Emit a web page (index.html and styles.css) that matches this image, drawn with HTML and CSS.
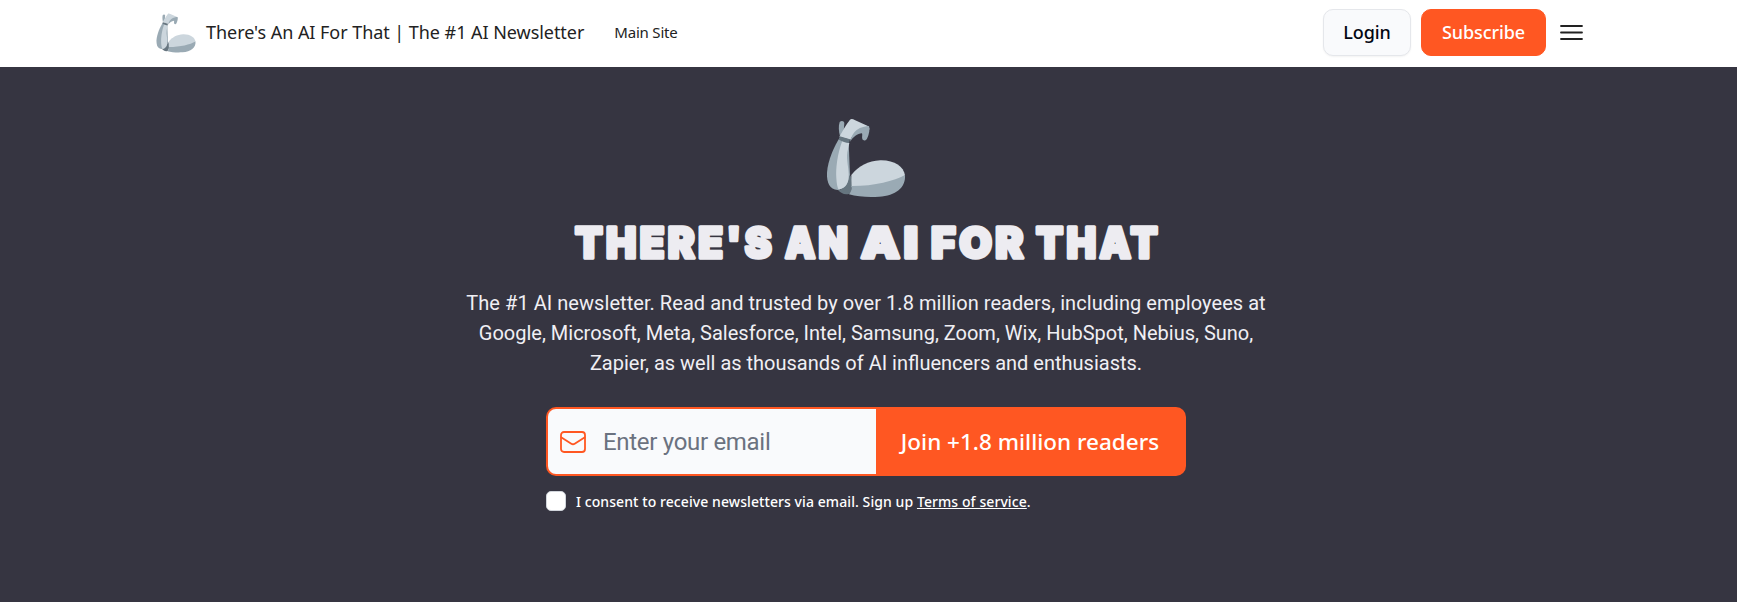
FILE: index.html
```
<!DOCTYPE html>
<html lang="en">

<head>
    <meta charset="UTF-8" />
    <title>There's An AI For That | The #1 AI Newsletter</title>
    <link rel="stylesheet" href="styles.css">
</head>

<body>
    <svg class="defs" width="0" height="0">
        <symbol id="arm" viewBox="78 54 240 240">
            <path fill="#9aaab4" d="M119 66c5-5 13-4 14 3l-2 26-11 14c-4-16-5-31-1-43z" />
            <path fill="#9aaab4" d="M119 113c-15 23-36 68-38 105-1 31 8 50 32 52l28-8 9-34-4-102z" />
            <path fill="#66757f" d="M148 226c8 2 13 24 7 41-3 9-5 16-14 16-10 1-20-5-27-13 18-3 29-13 34-44z" />
            <path fill="#ccd6dd" d="M127 122c-15 40-20 82-18 112 1 18 3 28 7 35 16-3 29-14 30-37 2-25-8-51-4-75l6-28z" />
            <path fill="#ccd6dd" d="M118 110c8-14 19-35 32-51 4-4 9-2 14 1l38 17c8 4 7 12 3 16-20-5-42 3-54 26z" />
            <path fill="#9aaab4" d="M150 125c5-18 11-28 20-35 13-9 27-12 37-12 3 10 1 24-6 38-4 7-11 7-14 1-2-6 1-12-1-17-14 1-26 11-36 25z" />
            <path fill="#66757f" d="M119 109l31 9-3 11c-10-1-20-5-30-10z" />
            <path fill="#ccd6dd" d="M154 225c21-27 51-42 87-44 42-1 70 19 74 45-24 20-90 36-160 35z" />
            <path fill="#9aaab4" d="M155 258c71 0 127-15 160-33 3 38-28 62-78 65-32 2-65 0-90-7 6-8 9-16 8-25z" />
        </symbol>
    </svg>

    <header class="header">
        <a class="brand">
            <svg class="brand-logo"><use href="#arm" /></svg>
            <span>There's An AI For That | The #1 AI Newsletter</span>
        </a>
        <a class="main-site">Main Site</a>
        <div class="actions">
            <button class="btn login">Login</button>
            <button class="btn subscribe">Subscribe</button>
            <svg class="menu" viewBox="0 0 23 17" fill="none" stroke="#222" stroke-width="1.8" stroke-linecap="round">
                <path d="M1 2h21M1 8.5h21M1 15h21" />
            </svg>
        </div>
    </header>

    <main class="hero">
        <svg class="hero-logo"><use href="#arm" /></svg>
        <h1 class="title">
            <svg width="600" height="64" viewBox="-7 0 600 64">
                <text x="2" y="46" textLength="200" lengthAdjust="spacingAndGlyphs">THERE'S</text>
                <text x="212" y="46" textLength="66" lengthAdjust="spacingAndGlyphs">AN</text>
                <text x="288" y="46" textLength="61" lengthAdjust="spacingAndGlyphs">AI</text>
                <text x="358" y="46" textLength="96" lengthAdjust="spacingAndGlyphs">FOR</text>
                <text x="463" y="46" textLength="125" lengthAdjust="spacingAndGlyphs">THAT</text>
            </svg>
        </h1>
        <p class="intro">
            <span class="first-line">The #1 AI newsletter. Read and trusted by over 1.8 million readers, including employees at</span><br>
            Google, Microsoft, Meta, Salesforce, Intel, Samsung, Zoom, Wix, HubSpot, Nebius, Suno,<br>
            Zapier, as well as thousands of AI influencers and enthusiasts.
        </p>
        <form class="signup">
            <div class="field-row">
                <label class="field">
                    <svg class="mail" viewBox="0 0 26 22" fill="none" stroke="#ff5722" stroke-width="1.8" stroke-linecap="round" stroke-linejoin="round">
                        <rect x="1" y="1" width="24" height="20" rx="3" />
                        <path d="M1.5 6.5l9.8 6.2q1.7 1.1 3.4 0l9.8-6.2" />
                    </svg>
                    <input type="email" class="email" placeholder="Enter your email">
                </label>
                <button type="button" class="join">Join +1.8 million readers</button>
            </div>
            <div class="consent">
                <span class="checkbox"></span>
                <span class="consent-text">I consent to receive newsletters via email. Sign up <a class="terms">Terms of service</a>.</span>
            </div>
        </form>
    </main>
</body>

</html>
```
FILE: styles.css
```
* {
    box-sizing: border-box;
    margin: 0;
    padding: 0;
}

html {
    background-color: #363541;
}

body {
    font-family: "Noto Sans", "Open Sans", sans-serif;
    color: #222;
    overflow: hidden;
}

.defs {
    display: block;
}

.header {
    display: flex;
    align-items: center;
    height: 67px;
    padding: 0 154px 2px 156px;
    background-color: #fff;
}

.brand {
    display: flex;
    align-items: center;
    gap: 10px;
    font-size: 18px;
    letter-spacing: -0.05px;
    white-space: nowrap;
}

.brand span,
.main-site {
    padding-bottom: 1px;
}

.brand-logo {
    width: 40px;
    height: 40px;
}

.main-site {
    margin-left: 30px;
    font-size: 15px;
    letter-spacing: -0.2px;
}

.actions {
    display: flex;
    align-items: center;
    margin-left: auto;
}

.btn {
    height: 47px;
    padding-bottom: 1px;
    border: 1px solid #e5e7eb;
    border-radius: 10px;
    font-family: inherit;
    font-size: 18px;
    font-weight: 500;
    letter-spacing: -0.1px;
}

.login {
    width: 88px;
    margin-right: 10px;
    background-color: #f9fafc;
    color: #030712;
    box-shadow: 0 1px 2px rgba(0, 0, 0, 0.05);
}

.subscribe {
    width: 125px;
    margin-right: 14px;
    border-color: #ff5722;
    background-color: #ff5722;
    color: #fff;
}

.menu {
    width: 23px;
    height: 17px;
}

.hero {
    display: flex;
    flex-direction: column;
    align-items: center;
    height: 535px;
    padding: 51px 5px 0 0;
    background-color: #363541;
    color: #f0eff4;
}

.hero-logo {
    width: 80px;
    height: 80px;
}

.title {
    height: 64px;
    margin-top: 14px;
    line-height: 1;
}

.title text {
    font-family: Inter, sans-serif;
    font-size: 42px;
    font-weight: 900;
    letter-spacing: 3.5px;
    fill: #edecf1;
    stroke: #edecf1;
    stroke-width: 3.4px;
    stroke-linejoin: round;
}

.intro {
    margin-top: 12px;
    font-family: Roboto, sans-serif;
    font-size: 20px;
    line-height: 30px;
    text-align: center;
    white-space: nowrap;
}

.first-line {
    letter-spacing: 0.05px;
}

.signup {
    width: 640px;
    margin-top: 29px;
}

.field-row {
    display: flex;
    height: 69px;
}

.field {
    display: flex;
    align-items: center;
    width: 330px;
    padding-left: 12px;
    border: 2px solid #ff5722;
    border-right: 0;
    border-radius: 10px 0 0 10px;
    background-color: #f9fafc;
}

.mail {
    width: 26px;
    height: 22px;
    margin-right: 17px;
}

.email {
    width: 240px;
    border: 0;
    outline: 0;
    background: none;
    font-family: Roboto, sans-serif;
    font-size: 24px;
    letter-spacing: -0.3px;
}

.email::placeholder {
    color: #6b7280;
}

.join {
    width: 310px;
    padding: 0 2px 0 0;
    border: 0;
    border-radius: 0 10px 10px 0;
    background-color: #ff5722;
    color: #fff;
    font-family: inherit;
    font-size: 22.5px;
    font-weight: 500;
}

.consent {
    display: flex;
    align-items: center;
    gap: 10px;
    margin-top: 15px;
}

.checkbox {
    width: 20px;
    height: 20px;
    border: 1px solid #d1d5db;
    border-radius: 5px;
    background-color: #fff;
}

.consent-text {
    padding-top: 1px;
    font-size: 14px;
    font-weight: 500;
    line-height: 19px;
    letter-spacing: 0.08px;
    color: #fff;
    white-space: nowrap;
}

.terms {
    text-decoration: underline;
}
```
